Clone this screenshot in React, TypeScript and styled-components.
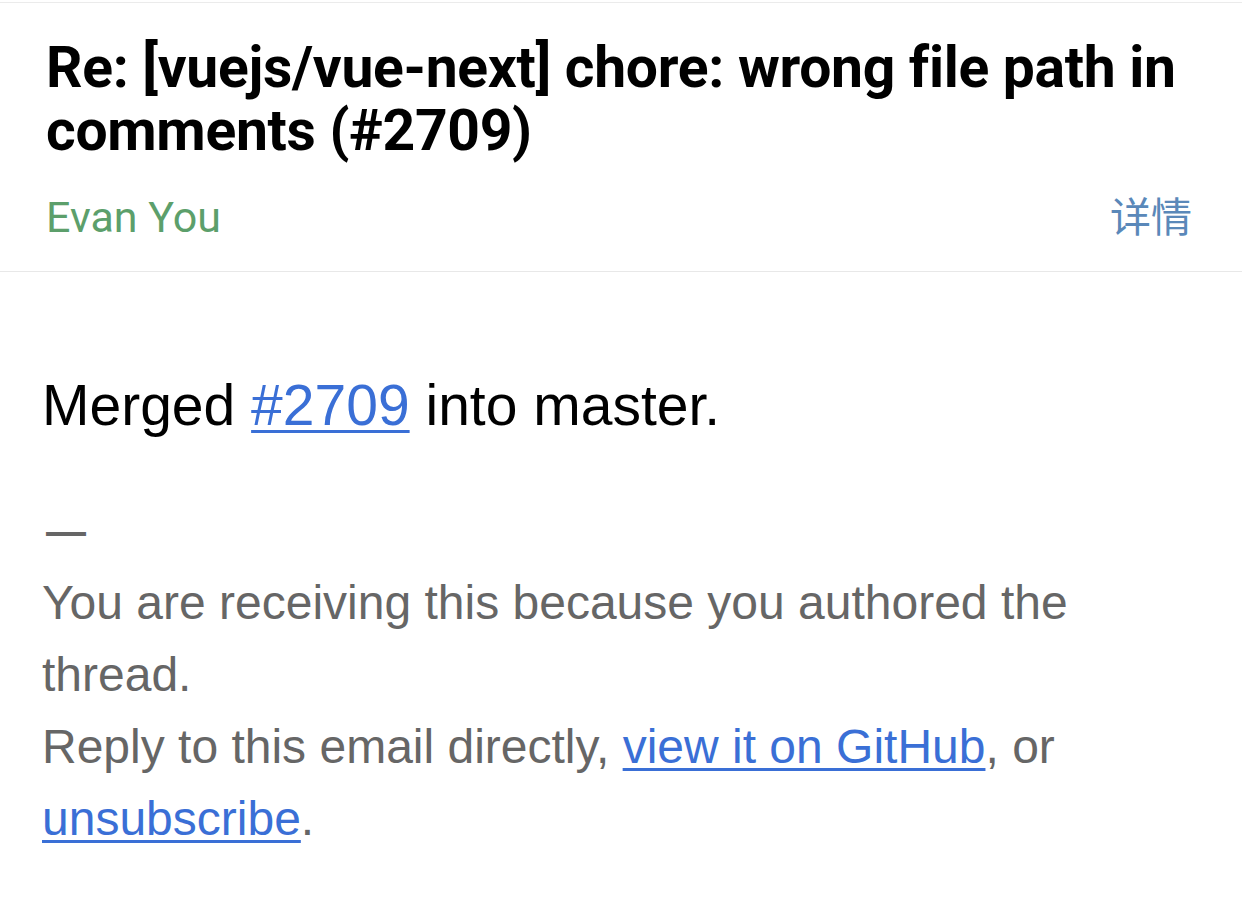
import React from 'react'
import styled, { createGlobalStyle } from 'styled-components'

const LookAndFeel = createGlobalStyle`
  html, body {
    margin: 0;
    padding: 0;
    background: #ffffff;
  }
  body {
    font-family: Roboto, "Noto Sans", sans-serif;
  }
`

const Page = styled.div`
  width: 1242px;
  min-height: 908px;
  background: #ffffff;
  border-top: 1px solid #ebebeb;
  margin-top: 2px;
`

const Header = styled.header`
  padding: 33px 50px 32px 46px;
  border-bottom: 1px solid #e8e8e8;
`

const Subject = styled.h1`
  margin: 0;
  font-family: Roboto, "Noto Sans", sans-serif;
  font-weight: 700;
  font-size: 57px;
  line-height: 63px;
  color: #000000;
  letter-spacing: -0.3px;
`

const MetaRow = styled.div`
  display: flex;
  justify-content: space-between;
  align-items: baseline;
  margin-top: 27px;
  height: 50px;
`

const Sender = styled.span`
  font-family: Roboto, "Noto Sans", sans-serif;
  font-size: 43px;
  line-height: 50px;
  color: #5c9f6b;
`

const Details = styled.span`
  font-family: "Noto Sans CJK SC", sans-serif;
  font-size: 41px;
  line-height: 50px;
  color: #5a88b9;
`

const Body = styled.main`
  padding: 101px 110px 0 42px;
  font-family: "Liberation Sans", Arial, sans-serif;
`

const Lead = styled.p`
  margin: 0;
  font-size: 57px;
  line-height: 64px;
  color: #000000;
`

const Link = styled.a`
  color: #3a6fd6;
  text-decoration: underline;
  text-underline-offset: 5px;
  text-decoration-thickness: 3px;
`

const Footer = styled.div`
  margin-top: 58px;
  font-size: 48px;
  line-height: 72px;
  color: #666666;
`

const Dash = styled.div`
  font-size: 40px;
  font-weight: 700;
  padding-left: 4px;
`

const App = () => {
  return (
    <Page>
      <LookAndFeel />
      <Header>
        <Subject>Re: [vuejs/vue-next] chore: wrong file path in comments (#2709)</Subject>
        <MetaRow>
          <Sender>Evan You</Sender>
          <Details>详情</Details>
        </MetaRow>
      </Header>
      <Body>
        <Lead>
          Merged <Link href="#">#2709</Link> into master.
        </Lead>
        <Footer>
          <Dash>—</Dash>
          You are receiving this because you authored the thread.
          <br />
          Reply to this email directly, <Link href="#">view it on GitHub</Link>, or{' '}
          <Link href="#">unsubscribe</Link>.
        </Footer>
      </Body>
    </Page>
  )
}

export default App
